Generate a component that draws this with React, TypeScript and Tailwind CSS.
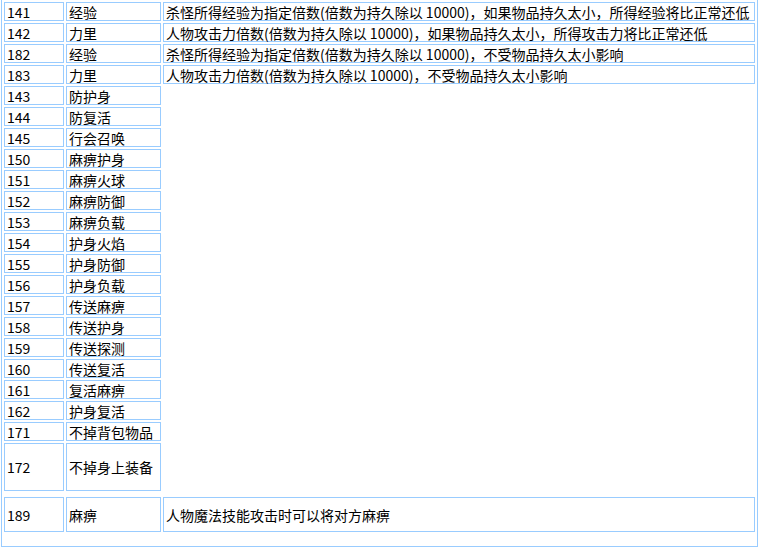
import React from "react";

type Row = { id: string; name: string; desc?: string; h?: string; extraTop?: boolean };

const rows: Row[] = [
  { id: "141", name: "经验", desc: "杀怪所得经验为指定倍数(倍数为持久除以 10000)，如果物品持久太小，所得经验将比正常还低" },
  { id: "142", name: "力里", desc: "人物攻击力倍数(倍数为持久除以 10000)，如果物品持久太小，所得攻击力将比正常还低" },
  { id: "182", name: "经验", desc: "杀怪所得经验为指定倍数(倍数为持久除以 10000)，不受物品持久太小影响" },
  { id: "183", name: "力里", desc: "人物攻击力倍数(倍数为持久除以 10000)，不受物品持久太小影响" },
  { id: "143", name: "防护身" },
  { id: "144", name: "防复活" },
  { id: "145", name: "行会召唤" },
  { id: "150", name: "麻痹护身" },
  { id: "151", name: "麻痹火球" },
  { id: "152", name: "麻痹防御" },
  { id: "153", name: "麻痹负载" },
  { id: "154", name: "护身火焰" },
  { id: "155", name: "护身防御" },
  { id: "156", name: "护身负载" },
  { id: "157", name: "传送麻痹" },
  { id: "158", name: "传送护身" },
  { id: "159", name: "传送探测" },
  { id: "160", name: "传送复活" },
  { id: "161", name: "复活麻痹" },
  { id: "162", name: "护身复活" },
  { id: "171", name: "不掉背包物品" },
  { id: "172", name: "不掉身上装备", h: "tall" },
  { id: "189", name: "麻痹", desc: "人物魔法技能攻击时可以将对方麻痹", h: "mid", extraTop: true },
];

function Cell({ w, h, children }: { w: string; h: string; children?: React.ReactNode }) {
  return (
    <div
      className={`${w} ${h} shrink-0 border border-[#99ccff] px-[2px] flex items-center whitespace-nowrap text-[14px] leading-[14px] text-black`}
    >
      {children}
    </div>
  );
}

export default function App() {
  return (
    <div className="bg-white w-[758px] h-[549px] overflow-hidden" style={{ fontFamily: '"Noto Sans CJK SC", "Noto Sans", sans-serif' }}>
      <div className="ml-[1px] w-[757px] border-x border-b border-[#99ccff] pt-[2px] px-[2px] pb-[14px] flex flex-col gap-[2px]">
        {rows.map((r) => {
          const h = r.h === "tall" ? "h-[48px]" : r.h === "mid" ? "h-[35px]" : "h-[19px]";
          return (
            <div key={r.id} className={`flex gap-[2px] ${r.extraTop ? "mt-[4px]" : ""}`}>
              <Cell w="w-[60px]" h={h}>{r.id}</Cell>
              <Cell w="w-[95px]" h={h}>{r.name}</Cell>
              {r.desc ? <Cell w="w-[592px]" h={h}>{r.desc}</Cell> : null}
            </div>
          );
        })}
      </div>
    </div>
  );
}
